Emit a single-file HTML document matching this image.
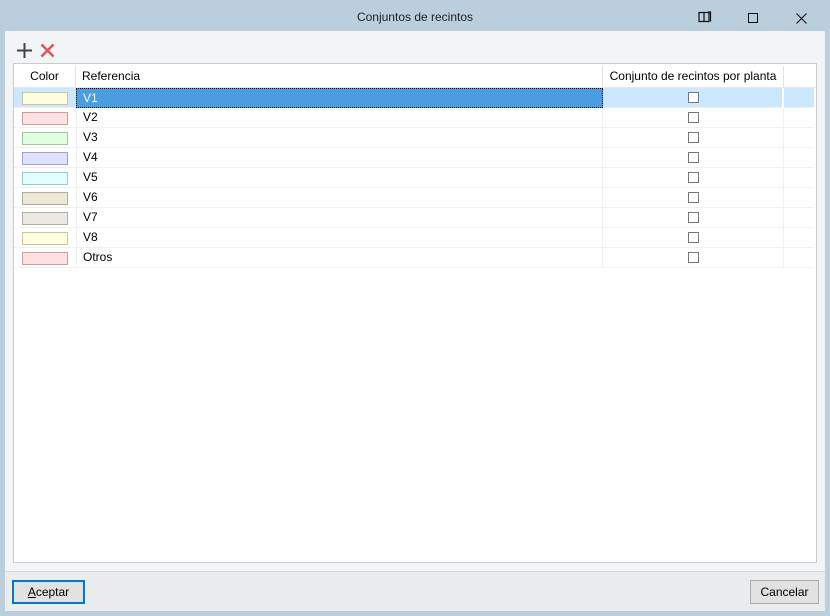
<!DOCTYPE html>
<html><head><style>
*{margin:0;padding:0;box-sizing:border-box}
body{width:830px;height:616px;background:#bacfdb;font-family:"Liberation Sans",sans-serif;font-size:12px;color:#000;position:relative;overflow:hidden}
.a{position:absolute}
.title{left:0;top:10px;width:830px;text-align:center;color:#222;font-size:12px}
.content{left:5px;top:31px;width:820px;height:580px;background:#f3f4f6}
.footer{left:5px;top:571px;width:820px;height:40px;background:#ebecee;border-top:1px solid #d6d8da}
.grid{left:13px;top:63px;width:804px;height:500px;background:#fff;border:1px solid #c9cbcd}
.hdr{top:2px;height:21px;line-height:21px;border-right:1px solid #e2e2e2}
.row{left:0;width:800px;height:20px;border-bottom:1px solid #f0f0f0}
.cell{top:0;height:20px;line-height:19px;border-right:1px solid #f0f0f0}
.sw{left:8px;top:4px;width:46px;height:13px;border:1px solid}
.cb{left:674px;top:4px;width:11px;height:11px;border:1px solid #777;background:#fff}
.btn{height:24px;top:580px;border:1px solid #adadad;background:#e1e1e1;text-align:center;line-height:22px}
</style></head><body>
<div class="a title">Conjuntos de recintos</div>
<svg class="a" style="left:698px;top:11px" width="14" height="12"><path d="M1 1.5h5v9H1zM6 1.5h5v9H6zM10 1h2.5v9.5" fill="none" stroke="#111" stroke-width="1.2"/></svg>
<div class="a" style="left:748px;top:13px;width:10px;height:10px;border:1px solid #111"></div>
<svg class="a" style="left:796px;top:13px" width="11" height="11"><path d="M0.5 0.5l10 10M10.5 0.5l-10 10" stroke="#111" stroke-width="1.1"/></svg>
<div class="a content"></div>
<svg class="a" style="left:17px;top:43px" width="15" height="15"><path d="M7.5 0v15M0 7.5h15" stroke="#444" stroke-width="2"/></svg>
<svg class="a" style="left:40px;top:43px" width="15" height="15"><path d="M1.5 1.5l12 12M13.5 1.5l-12 12" stroke="#d9575a" stroke-width="2.6"/></svg>
<div class="a grid">
 <div class="a hdr" style="left:0;width:62px;text-align:center">Color</div>
 <div class="a hdr" style="left:62px;width:527px;padding-left:6px">Referencia</div>
 <div class="a hdr" style="left:589px;width:181px;text-align:center">Conjunto de recintos por planta</div>
 <div class="a" style="left:0;top:23px;width:802px;border-top:1px solid #e8e8e8"></div>
 <div class="a row" style="top:24px;background:#cce8ff"><div class="a sw" style="background:#ffffe0;border-color:#c8c8a0"></div><div class="a cell" style="left:62px;width:527px;background:#4a9ee0;color:#fff;padding-left:6px;border:1px dotted #000">V1</div><div class="a cell" style="left:589px;width:181px;border-right:2px solid #fff"></div><div class="a cb"></div></div>
 <div class="a row" style="top:44px"><div class="a sw" style="background:#ffe0e0;border-color:#c8a0a0"></div><div class="a cell" style="left:62px;width:527px;padding-left:6px;border-left:1px solid #f0f0f0">V2</div><div class="a cell" style="left:589px;width:181px"></div><div class="a cb"></div></div>
 <div class="a row" style="top:64px"><div class="a sw" style="background:#e0ffe0;border-color:#a0c8a0"></div><div class="a cell" style="left:62px;width:527px;padding-left:6px;border-left:1px solid #f0f0f0">V3</div><div class="a cell" style="left:589px;width:181px"></div><div class="a cb"></div></div>
 <div class="a row" style="top:84px"><div class="a sw" style="background:#e0e0ff;border-color:#a0a0c8"></div><div class="a cell" style="left:62px;width:527px;padding-left:6px;border-left:1px solid #f0f0f0">V4</div><div class="a cell" style="left:589px;width:181px"></div><div class="a cb"></div></div>
 <div class="a row" style="top:104px"><div class="a sw" style="background:#e0ffff;border-color:#a0c8c8"></div><div class="a cell" style="left:62px;width:527px;padding-left:6px;border-left:1px solid #f0f0f0">V5</div><div class="a cell" style="left:589px;width:181px"></div><div class="a cb"></div></div>
 <div class="a row" style="top:124px"><div class="a sw" style="background:#ebe9d6;border-color:#b0ae9c"></div><div class="a cell" style="left:62px;width:527px;padding-left:6px;border-left:1px solid #f0f0f0">V6</div><div class="a cell" style="left:589px;width:181px"></div><div class="a cb"></div></div>
 <div class="a row" style="top:144px"><div class="a sw" style="background:#ece9e4;border-color:#b0aeaa"></div><div class="a cell" style="left:62px;width:527px;padding-left:6px;border-left:1px solid #f0f0f0">V7</div><div class="a cell" style="left:589px;width:181px"></div><div class="a cb"></div></div>
 <div class="a row" style="top:164px"><div class="a sw" style="background:#ffffe0;border-color:#c8c8a0"></div><div class="a cell" style="left:62px;width:527px;padding-left:6px;border-left:1px solid #f0f0f0">V8</div><div class="a cell" style="left:589px;width:181px"></div><div class="a cb"></div></div>
 <div class="a row" style="top:184px"><div class="a sw" style="background:#ffe0e0;border-color:#c8a0a0"></div><div class="a cell" style="left:62px;width:527px;padding-left:6px;border-left:1px solid #f0f0f0">Otros</div><div class="a cell" style="left:589px;width:181px"></div><div class="a cb"></div></div>
</div>
<div class="a footer"></div>
<div class="a btn" style="left:12px;width:73px;border:2px solid #0078d7;line-height:20px"><u>A</u>ceptar</div>
<div class="a btn" style="left:750px;width:69px">Cancelar</div>
</body></html>
